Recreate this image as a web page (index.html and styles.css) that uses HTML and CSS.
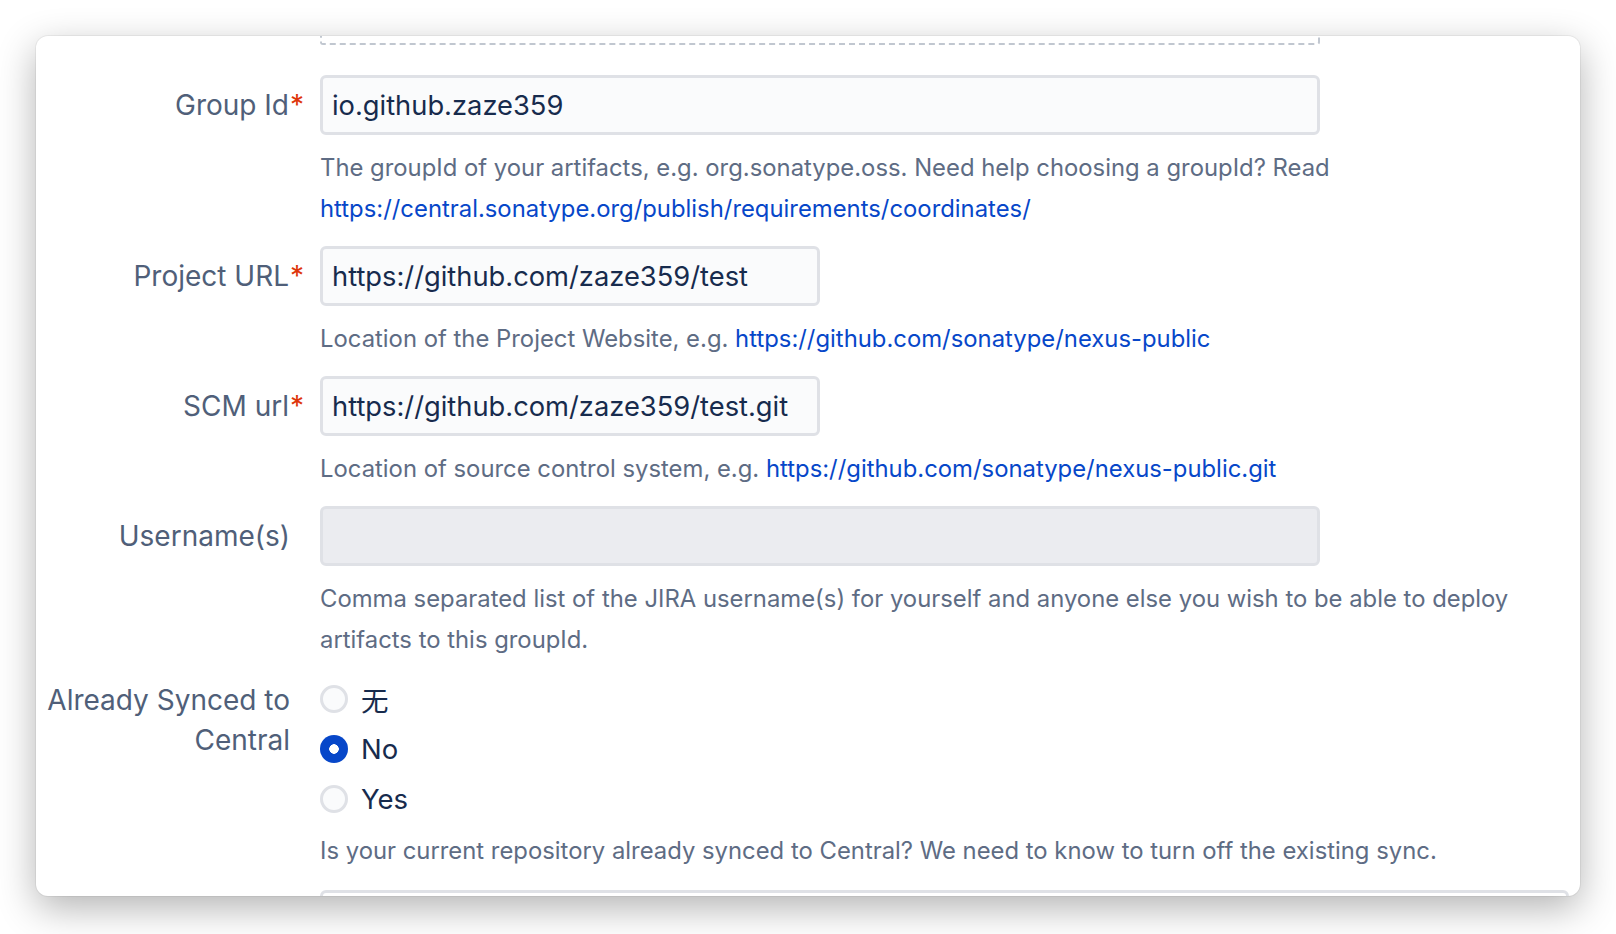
FILE: index.html
```html
<!DOCTYPE html>
<html lang="en">
<head>
<meta charset="utf-8">
<title>Create Issue</title>
<link rel="stylesheet" href="styles.css">
</head>
<body>
<div class="window">
  <div class="field top-row">
    <div class="label"></div>
    <div class="control"><div class="dropzone"></div></div>
  </div>

  <div class="field">
    <label class="label" for="gid">Group Id<span class="req">*</span></label>
    <div class="control">
      <input id="gid" class="input long" type="text" value="io.github.zaze359">
      <div class="help">The groupId of your artifacts, e.g. org.sonatype.oss. Need help choosing a groupId? Read <a href="#">https://central.sonatype.org/publish/requirements/coordinates/</a></div>
    </div>
  </div>

  <div class="field">
    <label class="label" for="purl">Project URL<span class="req">*</span></label>
    <div class="control">
      <input id="purl" class="input medium" type="text" value="https://github.com/zaze359/test">
      <div class="help">Location of the Project Website, e.g. <a href="#">https://github.com/sonatype/nexus-public</a></div>
    </div>
  </div>

  <div class="field">
    <label class="label" for="scm">SCM url<span class="req">*</span></label>
    <div class="control">
      <input id="scm" class="input medium" type="text" value="https://github.com/zaze359/test.git">
      <div class="help">Location of source control system, e.g. <a href="#">https://github.com/sonatype/nexus-public.git</a></div>
    </div>
  </div>

  <div class="field">
    <label class="label" for="users">Username(s)</label>
    <div class="control">
      <input id="users" class="input long muted" type="text" value="">
      <div class="help">Comma separated list of the JIRA username(s) for yourself and anyone else you wish to be able to deploy artifacts to this groupId.</div>
    </div>
  </div>

  <div class="field radio-field">
    <div class="label multi">Already Synced to Central</div>
    <div class="control">
      <div class="radios">
        <label class="radio"><input type="radio" name="sync"><span class="cjk">无</span></label>
        <label class="radio"><input type="radio" name="sync" checked><span>No</span></label>
        <label class="radio"><input type="radio" name="sync"><span>Yes</span></label>
      </div>
      <div class="help tight">Is your current repository already synced to Central? We need to know to turn off the existing sync.</div>
    </div>
  </div>

  <div class="field">
    <div class="label"></div>
    <div class="control"><div class="textarea"></div></div>
  </div>
</div>
</body>
</html>
```

FILE: styles.css
```css
html, body {
  margin: 0;
  padding: 0;
  background: #ffffff;
}

body {
  width: 1616px;
  height: 934px;
  overflow: hidden;
  font-family: Inter, "Noto Sans CJK SC", sans-serif;
  color: #172b4d;
}

.window {
  box-sizing: border-box;
  margin: 36px 0 0 36px;
  width: 1544px;
  height: 860px;
  padding-right: 11px;
  background: #ffffff;
  border-radius: 12px;
  overflow: hidden;
  box-shadow: 0 12px 38px rgba(0, 0, 0, 0.3), 0 0 0 1px rgba(0, 0, 0, 0.05);
}

.field {
  display: grid;
  grid-template-columns: 254px 1fr;
  column-gap: 30px;
  margin-bottom: 17px;
}

.top-row {
  margin-top: -20px;
  margin-bottom: 30px;
}

.dropzone {
  box-sizing: border-box;
  width: 1000px;
  height: 29px;
  border: 2px dashed #c1c7d0;
  border-radius: 0 0 3px 3px;
}

.label {
  display: block;
  text-align: right;
  font-size: 28px;
  line-height: 40px;
  padding-top: 10px;
  color: #505f79;
  white-space: nowrap;
}

.label.multi {
  white-space: normal;
  padding-top: 3px;
}

.req {
  display: inline-block;
  width: 12px;
  margin-right: -12px;
  padding-left: 1px;
  color: #de350b;
  text-align: left;
}

.control {
  min-width: 0;
}

.input {
  display: block;
  box-sizing: border-box;
  height: 60px;
  margin: 0;
  padding: 0 9px;
  border: 3px solid #dfe1e6;
  border-radius: 6px;
  background: #fafbfc;
  font-family: inherit;
  font-size: 27.3px;
  color: #172b4d;
  outline: none;
}

.input.long {
  width: 1000px;
}

.input.medium {
  width: 500px;
}

.input.muted {
  background: #ebecf0;
}

.help {
  margin-top: 12px;
  font-size: 23.85px;
  line-height: 41px;
  color: #5e6c84;
}

.help.tight {
  margin-top: 6px;
}

.help a {
  color: #0747c9;
  text-decoration: none;
}

.radios {
  display: flex;
  flex-direction: column;
  margin-top: -3px;
}

.radio {
  display: flex;
  align-items: center;
  gap: 13px;
  height: 50px;
  font-size: 27.5px;
  color: #172b4d;
}

.radio input {
  appearance: none;
  -webkit-appearance: none;
  box-sizing: border-box;
  width: 28px;
  height: 28px;
  margin: 0;
  border: 3px solid #dfe1e6;
  border-radius: 50%;
  background: #fafbfc;
}

.radio input:checked {
  border: none;
  background: radial-gradient(circle, #ffffff 0 4.5px, #0747c9 5px);
}

.cjk {
  font-family: "Noto Sans CJK SC", sans-serif;
}

.textarea {
  box-sizing: border-box;
  height: 100px;
  margin-top: 2px;
  border: 3px solid #dfe1e6;
  border-radius: 6px;
  background: #ffffff;
}
```
